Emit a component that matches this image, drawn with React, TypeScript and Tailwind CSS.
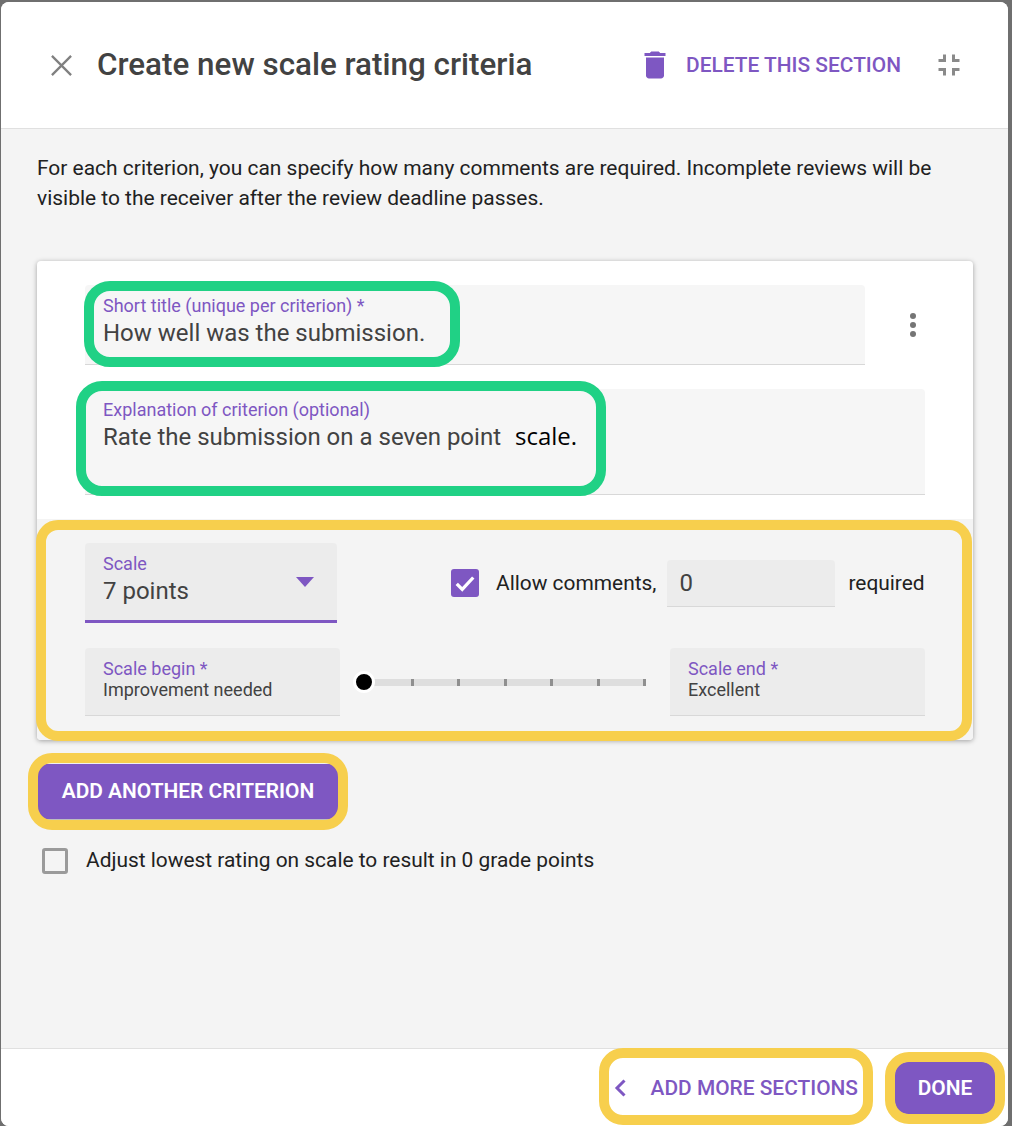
const roboto = "font-['Roboto',sans-serif]"

function FilledField({
  label,
  value,
  className,
  valueClass,
}: {
  label: string
  value: React.ReactNode
  className: string
  valueClass: string
}) {
  return (
    <div className={`rounded-t-[4px] border-b border-[#d8d8d8] px-[18px] ${className}`}>
      <div className="pt-[8px] text-[18px] leading-[25px] text-[#7e57c2]">{label}</div>
      <div className={`text-[#424242] ${valueClass}`}>{value}</div>
    </div>
  )
}

function Highlight({ className }: { className: string }) {
  return <div className={`pointer-events-none absolute ${className}`} />
}

export default function App() {
  return (
    <div className={`relative h-[1126px] w-[1012px] overflow-hidden bg-[#6f6f6f] pl-[1px] pr-[4px] pt-[2px] ${roboto}`}>
      <div className="flex h-full flex-col overflow-hidden rounded-[8px] bg-white">
        <header className="flex h-[127px] shrink-0 items-center border-b border-[#e0e0e0] bg-white">
          <svg className="ml-[49px] h-[23px] w-[23px]" viewBox="0 0 24 24" fill="none" stroke="#808080" strokeWidth="2.4">
            <path d="M2 2l20 20M22 2L2 22" />
          </svg>
          <h1 className="ml-[24px] text-[31.4px] font-medium text-[#424242]">Create new scale rating criteria</h1>
          <svg className="ml-auto h-[36px] w-[36px]" viewBox="0 0 24 24" fill="#7e57c2">
            <path d="M6 19c0 1.1.9 2 2 2h8c1.100 0 2-.9 2-2V7H6v12zM19 4h-3.500l-1-1h-5l-1 1H5v2h14V4z" />
          </svg>
          <span className="ml-[13px] pt-[2px] text-[20.9px] font-medium text-[#7e57c2]">DELETE THIS SECTION</span>
          <svg className="ml-[30px] mr-[41px] h-[36px] w-[36px]" viewBox="0 0 24 24" fill="#8a8a8a">
            <path d="M5 16h3v3h2v-5H5v2zm3-8H5v2h5V5H8v3zm6 11h2v-3h3v-2h-5v5zm2-11V5h-2v5h5V8h-3z" />
          </svg>
        </header>

        <main className="flex-1 bg-[#f4f4f4] pl-[36px] pr-[35px] pt-[24px]">
          <p className="text-[20.96px] leading-[30px] text-[#212121]">
            For each criterion, you can specify how many comments are required. Incomplete reviews will be visible to the receiver after the review deadline passes.
          </p>

          <section className="mt-[48px] overflow-hidden rounded-[4px] bg-white shadow-[0_1px_5px_rgba(0,0,0,0.35)]">
            <div className="pl-[48px] pt-[24px]">
              <div className="flex items-center">
                <FilledField
                  label="Short title (unique per criterion) *"
                  value="How well was the submission."
                  className="h-[80px] w-[780px] bg-[#f6f6f6]"
                  valueClass="text-[24px] leading-[30px]"
                />
                <svg className="ml-[30px] h-[36px] w-[36px]" viewBox="0 0 24 24" fill="#757575">
                  <circle cx="12" cy="6" r="2" />
                  <circle cx="12" cy="12" r="2" />
                  <circle cx="12" cy="18" r="2" />
                </svg>
              </div>
              <FilledField
                label="Explanation of criterion (optional)"
                value={
                  <>
                    Rate the submission on a seven point
                    <span className="ml-[14px] font-['Open_Sans',sans-serif] text-[24px] leading-[20px] text-black">scale.</span>
                  </>
                }
                className="mt-[24px] h-[106px] w-[840px] bg-[#f6f6f6]"
                valueClass="text-[24px] leading-[30px]"
              />
            </div>

            <div className="mt-[24px] h-[221px] bg-[#f4f4f4] px-[48px] pt-[24px]">
              <div className="flex h-[80px] items-center">
                <div className="relative h-[80px] w-[252px] shrink-0 rounded-t-[4px] border-b-[3px] border-[#7e57c2] bg-[#ececec] px-[18px]">
                  <div className="pt-[8px] text-[18px] leading-[25px] text-[#7e57c2]">Scale</div>
                  <div className="text-[24px] leading-[30px] text-[#424242]">7 points</div>
                  <div className="absolute right-[23px] top-[34px] h-0 w-0 border-x-[9px] border-t-[10px] border-x-transparent border-t-[#7e57c2]" />
                </div>
                <div className="ml-[114px] flex h-[28px] w-[28px] shrink-0 items-center justify-center rounded-[3px] bg-[#7e57c2]">
                  <svg className="h-[22px] w-[22px]" viewBox="0 0 24 24" fill="none" stroke="white" strokeWidth="3.6">
                    <path d="M3 13l6 6L21 6" />
                  </svg>
                </div>
                <span className="ml-[17px] shrink-0 whitespace-nowrap pt-[2px] text-[20.9px] text-[#212121]">Allow comments,</span>
                <div className="ml-[11px] flex h-[47px] w-[168px] shrink-0 items-center rounded-t-[4px] border-b border-[#d8d8d8] bg-[#ececec] px-[12px] text-[24px] text-[#424242]">0</div>
                <span className="ml-[13px] shrink-0 whitespace-nowrap pt-[2px] text-[20.9px] text-[#212121]">required</span>
              </div>

              <div className="mt-[25px] flex items-center">
                <FilledField
                  label="Scale begin *"
                  value="Improvement needed"
                  className="h-[68px] w-[255px] bg-[#ececec]"
                  valueClass="text-[18px] leading-[18px]"
                />
                <div className="relative ml-[24px] h-[7px] w-[282px]">
                  <div className="flex h-full justify-between bg-[#dedede]">
                    {[0, 1, 2, 3, 4, 5, 6].map(i => (
                      <span key={i} className="h-full w-[3px] bg-[#8f8f8f]" />
                    ))}
                  </div>
                  <div className="absolute left-[-11px] top-[-8px] h-[22px] w-[22px] rounded-full border-[3px] border-white bg-black" />
                </div>
                <FilledField
                  label="Scale end *"
                  value="Excellent"
                  className="ml-[24px] h-[68px] w-[255px] bg-[#ececec]"
                  valueClass="text-[18px] leading-[18px]"
                />
              </div>
            </div>
          </section>

          <button className="ml-[1px] mt-[24px] h-[55px] w-[300px] rounded-[8px] bg-[#7e57c2] text-[20.9px] font-semibold text-white shadow-[0_1px_2px_rgba(0,0,0,0.3)]">
            ADD ANOTHER CRITERION
          </button>

          <div className="ml-[5px] mt-[26px] flex items-center">
            <div className="h-[26px] w-[26px] rounded-[3px] border-[3px] border-[#9a9a9a]" />
            <span className="ml-[18px] text-[20.9px] text-[#212121]">Adjust lowest rating on scale to result in 0 grade points</span>
          </div>
        </main>

        <footer className="flex h-[78px] shrink-0 items-center justify-end border-t border-[#e0e0e0] bg-white pr-[13px]">
          <svg className="h-[18px] w-[12px]" viewBox="0 0 12 18" fill="none" stroke="#7e57c2" strokeWidth="3">
            <path d="M10.500 1.500L3 9l7.500 7.500" />
          </svg>
          <span className="ml-[25px] pt-[2px] text-[20.9px] font-medium text-[#7e57c2]">ADD MORE SECTIONS</span>
          <button className="ml-[37px] h-[52px] w-[100px] rounded-[12px] bg-[#7e57c2] pt-[2px] text-[20.9px] font-semibold text-white">DONE</button>
        </footer>
      </div>

      <Highlight className="left-[84px] top-[281px] h-[86px] w-[376px] rounded-[26px] border-[10px] border-[#20d185]" />
      <Highlight className="left-[76px] top-[381px] h-[115px] w-[530px] rounded-[26px] border-[10px] border-[#20d185]" />
      <Highlight className="left-[36px] top-[520px] h-[221px] w-[936px] rounded-[22px] border-[10px] border-[#f7cf4d]" />
      <Highlight className="left-[28px] top-[753px] h-[77px] w-[320px] rounded-[24px] border-[10px] border-[#f7cf4d]" />
      <Highlight className="left-[599px] top-[1048px] h-[77px] w-[274px] rounded-[24px] border-[10px] border-[#f7cf4d]" />
      <Highlight className="left-[885px] top-[1052px] h-[72px] w-[120px] rounded-[24px] border-[10px] border-[#f7cf4d]" />
    </div>
  )
}
